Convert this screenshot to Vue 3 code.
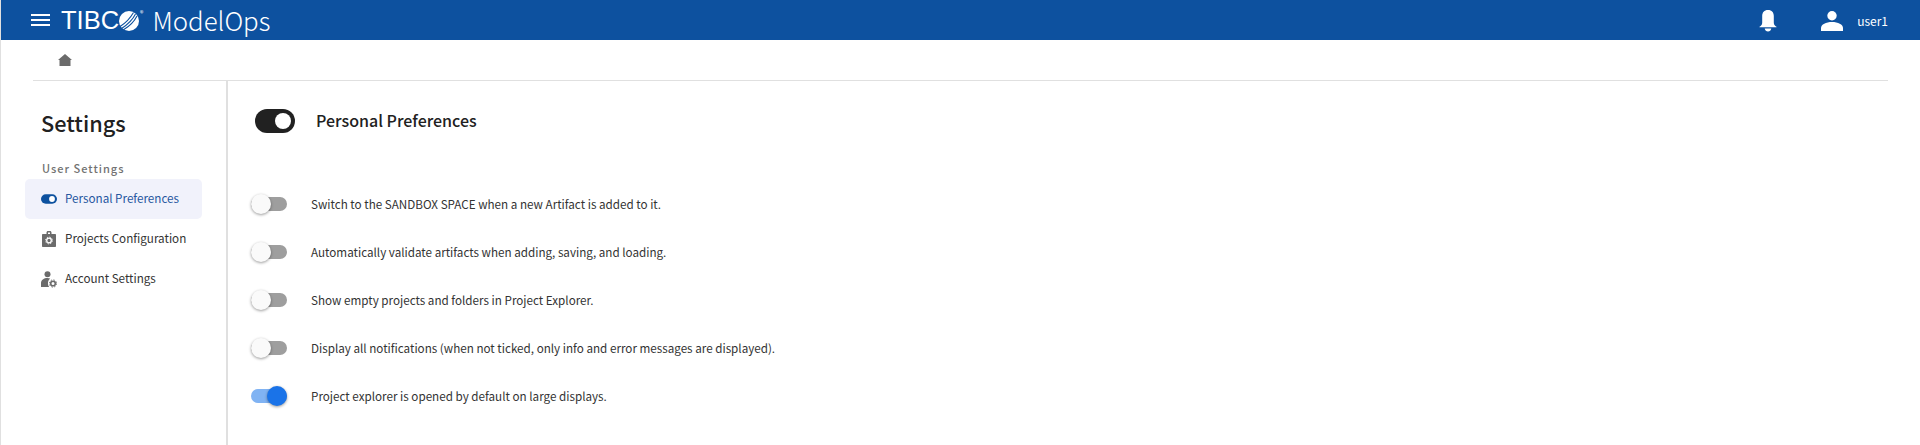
<script setup>
const items = [
  { label: 'Personal Preferences', icon: 'toggle', active: true },
  { label: 'Projects Configuration', icon: 'case' },
  { label: 'Account Settings', icon: 'account' },
]
const prefs = [
  { label: 'Switch to the SANDBOX SPACE when a new Artifact is added to it.', on: false },
  { label: 'Automatically validate artifacts when adding, saving, and loading.', on: false },
  { label: 'Show empty projects and folders in Project Explorer.', on: false },
  { label: 'Display all notifications (when not ticked, only info and error messages are displayed).', on: false },
  { label: 'Project explorer is opened by default on large displays.', on: true },
]
</script>

<template>
  <div class="page">
    <header class="topbar">
      <div class="menu"><span></span><span></span><span></span></div>
      <div class="brand">
        <span class="tibco">TIBC</span>
        <svg class="globe" viewBox="0 0 20 20" width="20" height="20">
          <circle cx="10" cy="10" r="10" fill="#fff" />
          <path d="M1 15.500C6 12.500 11 7.500 14.500 1.500M2.500 17.500C8 14 13.500 9 16.500 3M4.500 18.800C10 15.500 15 11 18 5" stroke="#0d519f" stroke-width="1.100" fill="none" />
        </svg>
        <sup class="reg">®</sup>
        <span class="product">ModelOps</span>
      </div>
      <div class="spacer"></div>
      <svg class="bell" viewBox="0 0 18 22" width="18" height="22">
        <path fill="#fff" d="M9 0c3.900 0 5.800 2.600 5.800 6v6.500c0 2 1 3.500 2.700 4.200v.6H.5v-.6c1.700-.7 2.700-2.200 2.700-4.200V6C3.200 2.600 5.100 0 9 0z" />
        <path fill="#fff" d="M5.700 18.500h6.600c-.3 1.800-1.600 3-3.300 3s-3-1.200-3.300-3z" />
      </svg>
      <svg class="user" viewBox="0 0 22 22" width="22" height="22">
        <circle cx="11" cy="6.700" r="4.700" fill="#fff" />
        <path fill="#fff" d="M0 22v-3c0-3.500 5-6 11-6s11 2.500 11 6v3z" />
      </svg>
      <span class="username">user1</span>
    </header>

    <div class="crumbs">
      <svg viewBox="0 0 14 12" width="14" height="12">
        <path fill="#6b6b6b" d="M7 0 14 6H12.500V12H1.500V6H0z" />
      </svg>
    </div>

    <div class="body">
      <aside class="side">
        <h1>Settings</h1>
        <div class="group">User Settings</div>
        <div v-for="it in items" :key="it.label" class="nav" :class="{ active: it.active }">
          <span class="nav-icon">
            <svg v-if="it.icon === 'toggle'" viewBox="0 0 16 10" width="16" height="10">
              <rect width="16" height="9.500" y=".25" rx="4.750" fill="#0d519f" />
              <circle cx="11" cy="5" r="2.900" fill="#fff" />
            </svg>
            <svg v-else-if="it.icon === 'case'" class="case-icon" viewBox="0 0 14 16" width="14" height="16">
              <path fill="#6b6b6b" d="M4.500 3V1.500C4.500.7 5.200 0 6 0h2c.8 0 1.500.7 1.500 1.500V3H13c.6 0 1 .4 1 1v11c0 .6-.4 1-1 1H1c-.6 0-1-.4-1-1V4c0-.6.4-1 1-1zM6 1.500V3h2V1.500z" />
              <circle cx="7" cy="9.500" r="2.300" fill="none" stroke="#fff" stroke-width="1.300" />
              <circle cx="7" cy="9.500" r="3.400" fill="none" stroke="#fff" stroke-width="1" stroke-dasharray="1.300 1.370" />
            </svg>
            <svg v-else viewBox="0 0 16 17" width="16" height="17">
              <circle cx="6.500" cy="3.200" r="3" fill="#6b6b6b" />
              <path fill="#6b6b6b" d="M0 16v-4c0-3 3-5 6.500-5 1 0 1.900.2 2.700.5C7.400 9 6.800 11 7 13c.1 1.200.6 2.200 1.200 3z" />
              <circle cx="12" cy="12.500" r="2.300" fill="none" stroke="#6b6b6b" stroke-width="1.600" />
              <circle cx="12" cy="12.500" r="3.600" fill="none" stroke="#6b6b6b" stroke-width="1" stroke-dasharray="1.400 1.430" />
            </svg>
          </span>
          <span class="nav-label">{{ it.label }}</span>
        </div>
      </aside>

      <main class="main">
        <div class="title-row">
          <span class="big-toggle"><i></i></span>
          <h2>Personal Preferences</h2>
        </div>
        <div class="prefs">
          <div v-for="p in prefs" :key="p.label" class="pref">
            <span class="switch" :class="{ on: p.on }"><i></i></span>
            <span class="pref-label">{{ p.label }}</span>
          </div>
        </div>
      </main>
    </div>
  </div>
</template>

<style>
html, body { margin: 0; background: #fff; }
</style>

<style scoped>
.page {
  height: 445px;
  overflow: hidden;
  display: flex;
  flex-direction: column;
  font-family: "Noto Sans CJK SC", "Noto Sans", sans-serif;
  color: #333;
  border-left: 1px solid #e0e0e0;
  box-sizing: border-box;
}
.topbar {
  height: 40px;
  margin-left: -1px;
  background: #0d519f;
  display: flex;
  align-items: center;
  color: #fff;
  flex: none;
}
.menu {
  margin-left: 31px;
  width: 19px;
  display: flex;
  flex-direction: column;
  gap: 3px;
}
.menu span { height: 2px; background: #fff; }
.brand {
  margin-left: 11px;
  display: flex;
  align-items: center;
}
.tibco {
  font-family: "Liberation Sans", sans-serif;
  font-size: 25.500px;
  line-height: 40px;
}
.globe { margin: 2px 0 0 0; }
.reg {
  font-size: 7px;
  margin: -14px 0 0 1px;
  line-height: 1;
}
.product {
  margin-left: 9px;
  font-weight: 300;
  font-size: 25.800px;
  line-height: 40px;
}
.spacer { flex: 1; }
.bell { margin-right: 44px; margin-top: 2px; }
.user { margin-right: 14px; }
.username { font-size: 12px; margin-right: 32px; }
.crumbs {
  height: 40px;
  margin: 0 32px;
  padding-left: 25px;
  display: flex;
  align-items: center;
  border-bottom: 1px solid #e0e0e0;
  flex: none;
}
.body { flex: 1; display: flex; min-height: 0; }
.side {
  width: 227px;
  flex: none;
  box-sizing: border-box;
  border-right: 2px solid #e0e0e0;
  padding: 0 0 0 24px;
}
h1 {
  margin: 26px 0 0 16px;
  font-size: 21.700px;
  line-height: 32px;
  font-weight: 500;
  color: #212121;
}
.group {
  margin: 21px 0 3px 17px;
  font-size: 11px;
  line-height: 16px;
  font-weight: 500;
  letter-spacing: 1px;
  color: #727272;
}
.nav {
  width: 177px;
  height: 40px;
  box-sizing: border-box;
  padding-left: 16px;
  display: flex;
  align-items: center;
  font-size: 11.670px;
  color: #333;
  border-radius: 5px;
}
.nav.active { background: #f1f2fb; color: #27579f; }
.nav-icon { width: 24px; display: flex; align-items: center; }
.nav-label { margin-top: -3px; }
.case-icon { margin-left: 1px; }
.main { flex: 1; padding-left: 27px; min-width: 0; }
.title-row {
  height: 24px;
  margin-top: 28px;
  display: flex;
  align-items: center;
}
.big-toggle {
  width: 40px;
  height: 24px;
  border-radius: 12px;
  background: #212121;
  display: flex;
  align-items: center;
  justify-content: flex-end;
  padding-right: 4px;
  box-sizing: border-box;
}
.big-toggle i {
  width: 16px;
  height: 16px;
  background: #fff;
  border-radius: 50%;
}
h2 {
  margin: -2px 0 0 21px;
  font-size: 16px;
  font-weight: 500;
  color: #212121;
}
.prefs { margin-top: 47px; }
.pref { height: 48px; display: flex; align-items: center; }
.switch {
  position: relative;
  width: 36px;
  height: 14px;
  margin-left: -4px;
  border-radius: 7px;
  background: #9e9e9e;
  flex: none;
}
.switch i {
  position: absolute;
  top: -3px;
  left: 0;
  width: 20px;
  height: 20px;
  border-radius: 50%;
  background: #fafafa;
  box-shadow: 0 1px 3px rgba(0, 0, 0, .4);
}
.switch.on { background: #80b3f3; }
.switch.on i { left: 16px; background: #1a73e8; }
.pref-label { margin: -2px 0 0 24px; font-size: 11.670px; color: #333; }
</style>
